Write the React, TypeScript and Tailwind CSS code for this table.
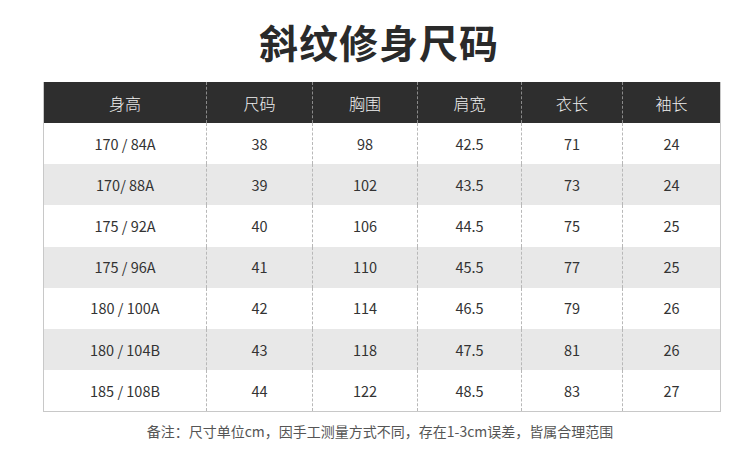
import React from "react";

const heads = ["身高", "尺码", "胸围", "肩宽", "衣长", "袖长"];

const rows = [
  ["170 / 84A", "38", "98", "42.5", "71", "24"],
  ["170/ 88A", "39", "102", "43.5", "73", "24"],
  ["175 / 92A", "40", "106", "44.5", "75", "25"],
  ["175 / 96A", "41", "110", "45.5", "77", "25"],
  ["180 / 100A", "42", "114", "46.5", "79", "26"],
  ["180 / 104B", "43", "118", "47.5", "81", "26"],
  ["185 / 108B", "44", "122", "48.5", "83", "27"],
];

const cols = "grid grid-cols-[162px_106px_105px_104px_101px_98px]";

const App = () => {
  return (
    <div className="w-[750px] h-[449px] bg-white font-['Noto_Sans_CJK_SC','Noto_Sans',sans-serif] overflow-hidden">
      <div className="ml-[40px] w-[678px]">
        <h1 className="h-[82px] flex items-center justify-center text-[39px] font-bold text-[#2a2a2a] tracking-[1px]">
          斜纹修身尺码
        </h1>
      </div>

      <div className="ml-[43px] w-[678px] border border-t-0 border-[#c8c8c8]">
        <div className={`${cols} h-[41px] bg-[#2e2e2e] text-[#f0f0f0] text-[16px] font-light`}>
          {heads.map((h, i) => (
            <div
              key={h}
              className={`flex items-center justify-center ${i > 0 ? "border-l border-dashed border-[#8a8a8a]" : ""}`}
            >
              {h}
            </div>
          ))}
        </div>
        {rows.map((r, ri) => (
          <div
            key={ri}
            className={`${cols} h-[41.2px] text-[14.5px] text-[#333] ${ri % 2 === 1 ? "bg-[#e8e8e8]" : "bg-white"}`}
          >
            {r.map((c, i) => (
              <div
                key={i}
                className={`flex items-center justify-center ${i > 0 ? "border-l border-dashed border-[#b8b8b8]" : ""}`}
              >
                {c}
              </div>
            ))}
          </div>
        ))}
      </div>

      <p className="ml-[41px] w-[678px] mt-[9px] text-center text-[14px] text-[#555]">
        备注：尺寸单位cm，因手工测量方式不同，存在1-3cm误差，皆属合理范围
      </p>
    </div>
  );
};

export default App;
